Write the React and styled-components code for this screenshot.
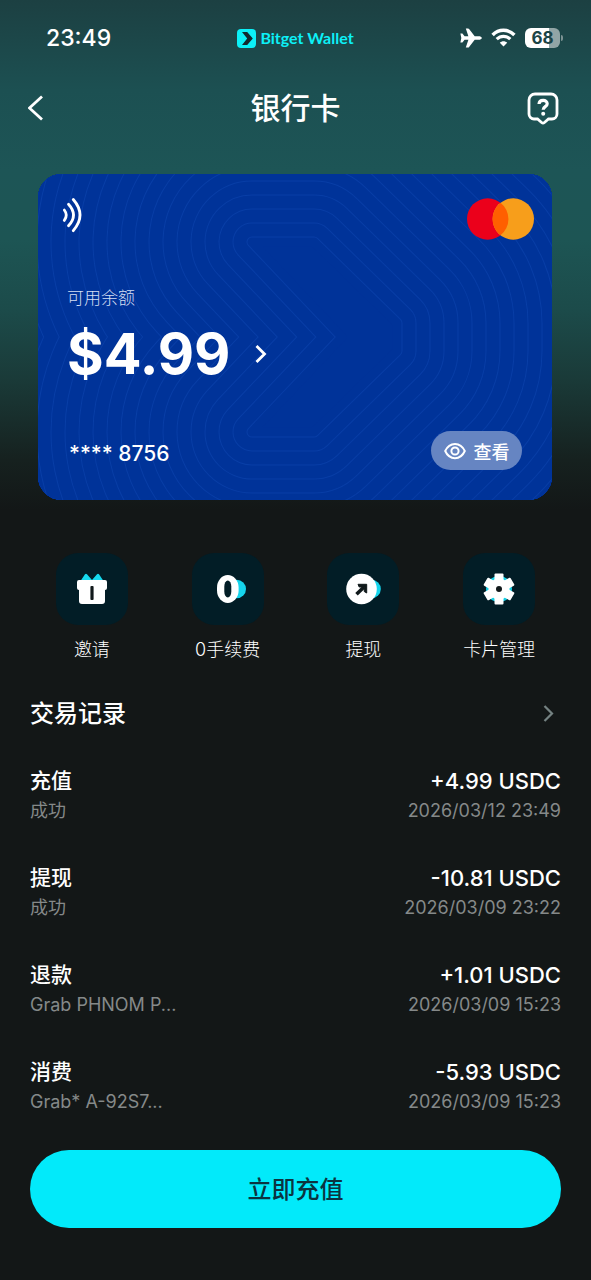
import React from "react";
import styled, { createGlobalStyle } from "styled-components";

const GlobalStyle = createGlobalStyle`
  * { box-sizing: border-box; }
  html { background: #131717; }
  body {
    margin: 0;
    color: #fff;
    font-family: Inter, "Noto Sans CJK SC", sans-serif;
  }
  button {
    margin: 0;
    padding: 0;
    border: 0;
    background: none;
    color: inherit;
    font: inherit;
    cursor: pointer;
  }
  h1, h2, h3, p, ul { margin: 0; padding: 0; }
  svg { display: block; flex: none; }
`;

const Screen = styled.div`
  display: flex;
  flex-direction: column;
  min-height: 100vh;
  background: linear-gradient(
      #1c4042 0, #1c5052 90px, #1d5556 170px, #1d5554 240px, #1c4b4a 310px,
      #1a3a38 380px, #16211f 460px, #131717 510px
    ) #131717;
`;

const StatusBar = styled.div`
  display: grid;
  grid-template-columns: 1fr auto 1fr;
  align-items: center;
  height: 76px;
  padding: 0 28px 0 46px;
`;

const Clock = styled.time`
  font-size: 23px;
  font-weight: 500;
`;

const Brand = styled.div`
  display: flex;
  align-items: center;
  gap: 4px;
  margin-right: 18px;
  color: #0cf0f7;
  font-family: Lato, sans-serif;
  font-size: 16px;
  font-weight: 700;
  line-height: 18px;
`;

const StatusIcons = styled.div`
  display: flex;
  align-items: center;
  justify-content: flex-end;
  gap: 9px;
`;

const Battery = styled.div`
  display: flex;
  align-items: center;
  gap: 1px;
`;

const BatteryBody = styled.div`
  width: 35px;
  height: 20px;
  border-radius: 6px;
  background: linear-gradient(90deg, #fff 68%, #92a5a6 68%);
  color: #1c4446;
  font-size: 17px;
  font-weight: 700;
  line-height: 20px;
  text-align: center;
`;

const BatteryTip = styled.div`
  width: 2px;
  height: 6px;
  border-radius: 0 2px 2px 0;
  background: #7c9293;
`;

const Header = styled.header`
  display: flex;
  align-items: center;
  justify-content: space-between;
  height: 64px;
  padding: 0 28px;
`;

const Title = styled.h1`
  font-size: 30px;
  font-weight: 500;
  line-height: 40px;
`;

const IconButton = styled.button`
  display: flex;
  justify-content: ${(p) => (p.$end ? "flex-end" : "flex-start")};
  width: 40px;
  padding-right: ${(p) => (p.$end ? "4px" : "0")};
`;

const Card = styled.section`
  position: relative;
  display: flex;
  flex-direction: column;
  height: 326px;
  margin: 34px 39px 0 38px;
  padding: 24px 30px 30px 29px;
  border-radius: 24px;
  overflow: hidden;
  background: #003399;
`;

const CardPattern = styled.svg`
  position: absolute;
  top: 0;
  left: 0;
  width: 100%;
  height: 100%;
`;

const CardRow = styled.div`
  position: relative;
  display: flex;
  align-items: center;
  justify-content: space-between;
`;

const CardLogos = styled(CardRow)`
  align-items: flex-start;
  margin: 0 -12px 0 -6px;
`;

const BalanceLabel = styled.p`
  position: relative;
  margin-top: 46px;
  color: #d5def2;
  font-size: 17px;
  font-weight: 300;
  line-height: 24px;
`;

const Balance = styled.button`
  position: relative;
  display: flex;
  align-items: center;
  align-self: flex-start;
  gap: 24px;
  margin-top: 12px;
  font-size: 56px;
  font-weight: 700;
  line-height: 64px;
`;

const CardFooter = styled(CardRow)`
  margin-top: auto;
`;

const CardNumber = styled.p`
  padding: 6px 0 0 2px;
  font-size: 21px;
  font-weight: 500;
  line-height: 28px;
`;

const ViewButton = styled.button`
  display: flex;
  align-items: center;
  justify-content: center;
  gap: 8px;
  width: 91px;
  height: 39px;
  border-radius: 20px;
  background: #6685c2;
  font-size: 18px;
  font-weight: 500;
`;

const Actions = styled.nav`
  display: grid;
  grid-template-columns: repeat(4, 1fr);
  margin: 53px 24px 0;
`;

const Action = styled.button`
  display: flex;
  flex-direction: column;
  align-items: center;
  gap: 12px;
  font-size: 18px;
  font-weight: 300;
  line-height: 26px;
`;

const ActionTile = styled.span`
  display: flex;
  align-items: center;
  justify-content: center;
  width: 72px;
  height: 72px;
  border-radius: 22px;
  background: #021d26;
`;

const HistoryHeader = styled.div`
  display: flex;
  align-items: center;
  justify-content: space-between;
  margin: 33px 36px 0 30px;
`;

const HistoryTitle = styled.h2`
  font-size: 24px;
  font-weight: 500;
  line-height: 36px;
`;

const Records = styled.ul`
  display: grid;
  gap: 37px;
  margin: 34px 30px 0;
  list-style: none;
`;

const Record = styled.li`
  display: flex;
  justify-content: space-between;
`;

const RecordSide = styled.div`
  text-align: ${(p) => (p.$end ? "right" : "left")};
`;

const RecordMain = styled.p`
  font-size: ${(p) => (p.$amount ? "22px" : "21px")};
  font-weight: 500;
  line-height: 30px;
`;

const RecordNote = styled.p`
  color: #858989;
  font-size: 18px;
  font-weight: 400;
  line-height: 30px;
`;

const TopUpButton = styled.button`
  height: 78px;
  margin: 33px 30px 52px;
  padding-bottom: 3px;
  border-radius: 39px;
  background: #02eafa;
  color: #0b3440;
  font-size: 24px;
  font-weight: 500;
`;

const CHEVRON = "M214 68H276L359 149V177L276 258H214L304 163Z";
const RINGS = Array.from({ length: 22 }, (_, i) => 10 + (21 - i) * 28);

function ChevronPattern() {
  return (
    <CardPattern viewBox="0 0 514 326" preserveAspectRatio="xMidYMid slice" aria-hidden="true">
      {RINGS.map((width) => (
        <g key={width} fill="#003399" strokeLinejoin="round">
          <path d={CHEVRON} stroke="#083ea6" strokeWidth={width + 1} />
          <path d={CHEVRON} stroke="#003399" strokeWidth={width - 1} />
        </g>
      ))}
    </CardPattern>
  );
}

const BrandMark = () => (
  <svg width="19" height="19" viewBox="0 0 19 19" aria-hidden="true">
    <rect width="19" height="19" rx="4" fill="#0cf0f7" />
    <path d="M5 3h5.2l5.6 6.5-5.600 6.5H5l5.200-6.500z" fill="#12292e" />
  </svg>
);

const PlaneIcon = () => (
  <svg width="22" height="20" viewBox="0 0 22 20" fill="#fff" aria-hidden="true">
    <path d="M21.800 10c0 1.200-1.600 1.800-3.200 1.800h-3.900L9.300 18.700q-.6.900-1.300.9H5.800l2.600-7.800H4.600L2.400 14.500H.4L1.300 10 .4 5.500h2l2.200 2.700h3.800L5.800.4H8q.7 0 1.300.9l5.400 6.900h3.900c1.600 0 3.200.6 3.200 1.800z" />
  </svg>
);

const WifiIcon = () => (
  <svg width="25" height="20" viewBox="0 0 25 20" fill="none" aria-hidden="true">
    <path d="M1.600 7C7.800 .7 17.200 .7 23.400 7" stroke="#fff" strokeWidth="3.400" />
    <path d="M5.700 11.200c4-3.900 9.600-3.900 13.600 0" stroke="#fff" strokeWidth="3.200" />
    <path d="M12.500 18.500l-3.700-3.800c2.200-2 5.200-2 7.400 0z" fill="#fff" />
  </svg>
);

const BackIcon = () => (
  <svg width="16" height="28" viewBox="0 0 16 28" fill="none" aria-hidden="true">
    <path d="M14 2.500L1.500 14 14 25.500" stroke="#fff" strokeWidth="2.800" />
  </svg>
);

const HelpIcon = () => (
  <svg width="32" height="33" viewBox="0 0 32 33" fill="none" stroke="#fff" aria-hidden="true">
    <path
      d="M8 2h16a6 6 0 0 1 6 6v14a5 5 0 0 1-5 5h-3.500L17.400 30.500a2.200 2.200 0 0 1-2.800 0L10.500 27H7a5 5 0 0 1-5-5V8a6 6 0 0 1 6-6z"
      strokeWidth="2.800"
    />
    <path d="M12 12c.3-4.900 8.200-4.800 8.200-.3 0 3.200-4 2.700-4 6" strokeWidth="3.200" />
    <circle cx="16.200" cy="21.700" r="2" fill="#fff" stroke="none" />
  </svg>
);

const ContactlessIcon = () => (
  <svg width="24" height="36" viewBox="0 0 24 36" fill="none" stroke="#fff" strokeWidth="2.800" strokeLinecap="round" aria-hidden="true">
    <path d="M3.300 12q4 5.200 0 10.400" />
    <path d="M7.500 6.200q10 10.800 0 21.600" />
    <path d="M12.300 1.500q13.400 15.600 0 31.200" />
  </svg>
);

const MastercardLogo = () => (
  <svg width="67" height="42" viewBox="0 0 67 42" role="img" aria-label="Mastercard">
    <circle cx="20.700" cy="21" r="20.700" fill="#eb001b" />
    <circle cx="46.300" cy="21" r="20.700" fill="#f79e1b" />
    <path d="M33.500 4.700a20.700 20.700 0 0 1 0 32.600a20.700 20.700 0 0 1 0-32.600z" fill="#ff5f00" />
  </svg>
);

const BalanceArrow = () => (
  <svg width="14" height="20" viewBox="0 0 14 20" fill="none" aria-hidden="true">
    <path d="M2.500 2L10.500 10l-8 8" stroke="#fff" strokeWidth="2.800" />
  </svg>
);

const EyeIcon = () => (
  <svg width="22" height="18" viewBox="0 0 22 18" fill="none" stroke="#fff" strokeWidth="2" aria-hidden="true">
    <path d="M1.200 9C5.500-.500 16.500-.500 20.800 9 16.500 18.500 5.500 18.500 1.200 9z" strokeLinejoin="round" />
    <circle cx="11" cy="9" r="3.600" />
  </svg>
);

const GiftIcon = () => (
  <svg width="32" height="32" viewBox="0 0 32 32" aria-hidden="true">
    <path d="M4.500 8L9 1.300q1-1.300 2 0L16 7l5-5.700q1-1.300 2 0L27.500 8z" fill="#16d9ee" />
    <path d="M3 7h26q2 0 2 2v6q0 2-2 2v11q0 3-3 3H6q-3 0-3-3V17q-2 0-2-2V9q0-2 2-2z" fill="#fff" />
    <rect x="14.400" y="13" width="3.200" height="14" rx="1" fill="#11191b" />
  </svg>
);

const ZeroIcon = () => (
  <svg width="36" height="32" viewBox="0 0 36 32" aria-hidden="true">
    <circle cx="26.700" cy="16" r="9.300" fill="#16d5ed" />
    <rect x="7" y="2" width="21.600" height="28" rx="10.800" ry="12.500" fill="#fff" />
    <rect x="14.300" y="7.500" width="7" height="17" rx="3.500" ry="6" fill="#021d26" />
  </svg>
);

const WithdrawIcon = () => (
  <svg width="38" height="32" viewBox="0 0 38 32" aria-hidden="true">
    <circle cx="27.500" cy="16" r="9.300" fill="#16d5ed" />
    <circle cx="17.500" cy="16" r="15.300" fill="#fff" />
    <path d="M12.500 21.300L20 14" stroke="#10191b" strokeWidth="3.600" />
    <path d="M14 11.300H22.700V20l-2.500-1.500V14h-5z" fill="#10191b" stroke="#10191b" />
  </svg>
);

const GearIcon = () => (
  <svg width="32" height="32" viewBox="0 0 32 32" aria-hidden="true">
    <circle cx="16" cy="16" r="13" fill="#16cfe4" />
    <g fill="#fff">
      <circle cx="16" cy="16" r="10.500" />
      {[0, 60, 120].map((angle) => (
        <rect key={angle} x="11.500" y=".5" width="9" height="31" rx="1" transform={`rotate(${angle} 16 16)`} />
      ))}
    </g>
    <circle cx="16" cy="16" r="3" fill="#11191b" />
  </svg>
);

const MoreArrow = () => (
  <svg width="14" height="20" viewBox="0 0 14 20" fill="none" aria-hidden="true">
    <path d="M3.500 2L11 9.500 3.500 17" stroke="#748282" strokeWidth="2.200" />
  </svg>
);

const ACTIONS = [
  { label: "邀请", Icon: GiftIcon },
  { label: "0手续费", Icon: ZeroIcon },
  { label: "提现", Icon: WithdrawIcon },
  { label: "卡片管理", Icon: GearIcon },
];

const RECORDS = [
  { type: "充值", note: "成功", amount: "+4.99 USDC", date: "2026/03/12 23:49" },
  { type: "提现", note: "成功", amount: "-10.81 USDC", date: "2026/03/09 23:22" },
  { type: "退款", note: "Grab PHNOM P...", amount: "+1.01 USDC", date: "2026/03/09 15:23" },
  { type: "消费", note: "Grab* A-92S7...", amount: "-5.93 USDC", date: "2026/03/09 15:23" },
];

export default function App() {
  return (
    <Screen lang="zh-CN">
      <GlobalStyle />
      <StatusBar>
        <Clock>23:49</Clock>
        <Brand>
          <BrandMark />
          Bitget Wallet
        </Brand>
        <StatusIcons>
          <PlaneIcon />
          <WifiIcon />
          <Battery>
            <BatteryBody>68</BatteryBody>
            <BatteryTip />
          </Battery>
        </StatusIcons>
      </StatusBar>
      <Header>
        <IconButton aria-label="返回"><BackIcon /></IconButton>
        <Title>银行卡</Title>
        <IconButton $end aria-label="帮助"><HelpIcon /></IconButton>
      </Header>
      <Card>
        <ChevronPattern />
        <CardLogos>
          <ContactlessIcon />
          <MastercardLogo />
        </CardLogos>
        <BalanceLabel>可用余额</BalanceLabel>
        <Balance>
          $4.99
          <BalanceArrow />
        </Balance>
        <CardFooter>
          <CardNumber>**** 8756</CardNumber>
          <ViewButton>
            <EyeIcon />
            查看
          </ViewButton>
        </CardFooter>
      </Card>
      <Actions>
        {ACTIONS.map(({ label, Icon }) => (
          <Action key={label}>
            <ActionTile><Icon /></ActionTile>
            {label}
          </Action>
        ))}
      </Actions>
      <HistoryHeader>
        <HistoryTitle>交易记录</HistoryTitle>
        <button aria-label="全部交易记录"><MoreArrow /></button>
      </HistoryHeader>
      <Records>
        {RECORDS.map((r) => (
          <Record key={r.amount}>
            <RecordSide>
              <RecordMain>{r.type}</RecordMain>
              <RecordNote>{r.note}</RecordNote>
            </RecordSide>
            <RecordSide $end>
              <RecordMain $amount>{r.amount}</RecordMain>
              <RecordNote>{r.date}</RecordNote>
            </RecordSide>
          </Record>
        ))}
      </Records>
      <TopUpButton>立即充值</TopUpButton>
    </Screen>
  );
}
